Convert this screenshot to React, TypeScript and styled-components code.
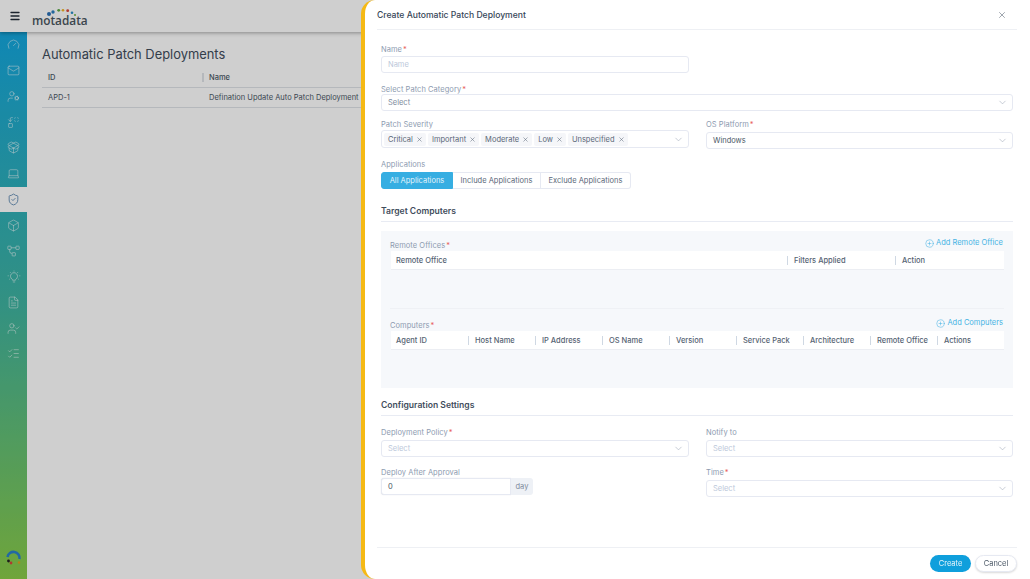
import { ReactNode } from "react"
import styled, { createGlobalStyle } from "styled-components"
import {
  Box,
  ChevronDown,
  CirclePlus,
  FileText,
  Gauge,
  Laptop,
  ListChecks,
  Mail,
  Menu,
  PackageOpen,
  Replace,
  ShieldCheck,
  UserCheck,
  UserCog,
  X,
} from "lucide-react"

const GlobalStyle = createGlobalStyle`
  html, body {
    margin: 0;
    height: 100%;
    overflow: hidden;
    background: #fff;
    font-family: Inter, "Liberation Sans", sans-serif;
    color: #364658;
  }
  #root { height: 100%; }
  * { box-sizing: border-box; }
`

const Shell = styled.div`
  position: relative;
  width: 1030px;
  height: 579px;
  overflow: hidden;
  display: flex;
  flex-direction: column;
`

const TopBar = styled.header`
  height: 32px;
  display: flex;
  align-items: center;
  padding-left: 9px;
  gap: 11px;
  box-shadow: 0 1px 4px rgba(0, 0, 0, 0.35);
  position: relative;
  z-index: 1;
  color: #222c38;
`

const Logo = styled.div`
  position: relative;
  font-family: "Open Sans", sans-serif;
  font-size: 11.8px;
  font-weight: 600;
  color: #4a5560;
  margin-top: 8px;
  line-height: 16px;
`

const LogoDots = styled.svg`
  position: absolute;
  left: 15px;
  top: -4px;
`

const Body = styled.div`
  flex: 1;
  display: flex;
  min-height: 0;
`

const Sidebar = styled.nav`
  width: 27px;
  background: linear-gradient(180deg, #14a7de 0%, #3fb3a0 50%, #8acc48 100%);
  display: flex;
  flex-direction: column;
  position: relative;
`

const NavItem = styled.div<{ $active?: boolean }>`
  height: 25.75px;
  display: flex;
  align-items: center;
  justify-content: center;
  color: ${p => (p.$active ? "#5b87b0" : "rgba(255, 255, 255, 0.55)")};
  background: ${p => (p.$active ? "#fff" : "transparent")};
`

const Spinner = styled.svg`
  position: absolute;
  left: 5px;
  bottom: 12px;
`

const Main = styled.main`
  flex: 1;
  padding: 14px 0 0 15px;
`

const PageTitle = styled.h1`
  margin: 0 0 4px;
  font-size: 12.9px;
  font-weight: 400;
  line-height: 18px;
  color: #3f4d5c;
`

const ListRow = styled.div<{ $head?: boolean }>`
  display: grid;
  grid-template-columns: 154px 1fr;
  height: 20px;
  align-items: center;
  border-bottom: 1px solid #dfe3e8;
  font-size: 7.5px;
  font-weight: ${p => (p.$head ? 500 : 400)};
  color: #4b5866;
  white-space: nowrap;
  padding-left: 6px;
`

const ListName = styled.span<{ $sep?: boolean }>`
  padding-left: 5px;
  border-left: 2px solid ${p => (p.$sep ? "#dfe3e8" : "transparent")};
`

const Overlay = styled.div`
  position: absolute;
  inset: 0;
  background: rgba(0, 0, 0, 0.19);
  backdrop-filter: blur(0.7px);
  z-index: 2;
`

const Drawer = styled.aside`
  position: absolute;
  z-index: 3;
  top: 0;
  bottom: 0;
  left: 361px;
  right: 0;
  background: #fff;
  border-left: 4px solid #f5b915;
  border-radius: 14px 0 0 14px;
  display: flex;
  flex-direction: column;
  padding: 0 13px 0 12px;
`

const DrawerHead = styled.div`
  height: 30px;
  flex: none;
  display: flex;
  align-items: center;
  justify-content: space-between;
  border-bottom: 1px solid #eef0f4;
  font-size: 8.6px;
  font-weight: 500;
  color: #364658;
  padding-right: 10px;
`

const CloseBtn = styled.span`
  display: flex;
  color: #6f7a86;
`

const Form = styled.div`
  flex: 1;
  padding: 14px 4px 0 4px;
  display: flex;
  flex-direction: column;
`

const Field = styled.div<{ $w?: string; $mb?: number; $gap: number }>`
  width: ${p => p.$w || "100%"};
  margin-bottom: ${p => p.$mb ?? 0}px;
  display: flex;
  flex-direction: column;
  gap: ${p => p.$gap}px;
`

const TwoCol = styled.div<{ $mb?: number; $mt?: number }>`
  display: grid;
  grid-template-columns: 308px 307px;
  column-gap: 17px;
  margin-top: ${p => p.$mt ?? 0}px;
  margin-bottom: ${p => p.$mb ?? 0}px;
`

const Label = styled.label`
  display: block;
  height: 10px;
  font-size: 7.5px;
  line-height: 12px;
  color: #8d9bb0;
  letter-spacing: 0.05px;
`

const Star = styled.span`
  color: #e8605c;
  margin-left: 1px;
`

const Control = styled.div<{ $h?: number; $muted?: boolean; $dark?: boolean }>`
  height: ${p => p.$h ?? 17}px;
  border: 1px solid #e6e9f2;
  border-radius: 3px;
  background: #fff;
  display: flex;
  align-items: center;
  justify-content: space-between;
  padding: 0 4px 0 6px;
  font-size: 7.5px;
  color: ${p => (p.$dark ? "#4b5866" : p.$muted ? "#bcc8da" : "#7d8a9c")};
`

const Chevron = styled(ChevronDown)`
  color: #a9b1bf;
  flex: none;
`

const TagBox = styled(Control)`
  padding: 0 4px 0 2px;
`

const Tags = styled.div`
  display: flex;
  gap: 2px;
`

const Tag = styled.span`
  height: 13px;
  padding: 0 3px 0 4px;
  display: flex;
  align-items: center;
  gap: 3px;
  background: #f5f6f9;
  border-radius: 2px;
  color: #5a6778;
  font-size: 7.5px;
`

const Segments = styled.div`
  display: flex;
  align-self: flex-start;
`

const Segment = styled.div<{ $on?: boolean; $w: number }>`
  width: ${p => p.$w}px;
  height: 17px;
  display: flex;
  align-items: center;
  justify-content: center;
  font-size: 7.5px;
  color: ${p => (p.$on ? "#e4f4fb" : "#5a6778")};
  background: ${p => (p.$on ? "#36aee2" : "#fff")};
  border: 1px solid ${p => (p.$on ? "#36aee2" : "#e6e9f2")};
  border-left-width: ${p => (p.$on ? 1 : 0)}px;
  &:first-child { border-radius: 3px 0 0 3px; }
  &:last-child { border-radius: 0 3px 3px 0; }
`

const Section = styled.h2<{ $mt?: number }>`
  margin: ${p => p.$mt ?? 0}px 0 0;
  height: 18px;
  font-size: 8.6px;
  font-weight: 600;
  line-height: 14px;
  color: #3f4d5c;
  border-bottom: 1px solid #e8ebf3;
`

const Panel = styled.div`
  margin-top: 9px;
  height: 157px;
  background: #f6f8fb;
  padding: 0 9px 0 9px;
  display: flex;
  flex-direction: column;
`

const PanelBlock = styled.div<{ $h: number; $line?: boolean }>`
  height: ${p => p.$h}px;
  flex: none;
  border-bottom: ${p => (p.$line ? "1px solid #eff1f5" : "none")};
`

const BlockHead = styled.div<{ $h: number }>`
  height: ${p => p.$h}px;
  display: flex;
  justify-content: space-between;
  align-items: flex-end;
`

const BlockLabel = styled(Label)`
  margin-bottom: 1px;
`

const AddLink = styled.a<{ $mt: number }>`
  display: flex;
  align-items: center;
  gap: 2px;
  align-self: flex-start;
  font-size: 7.5px;
  line-height: 10px;
  color: #45b3e4;
  margin-top: ${p => p.$mt}px;
  padding-right: 1px;
`

const THead = styled.div<{ $cols: string }>`
  display: grid;
  grid-template-columns: ${p => p.$cols};
  height: 19px;
  margin-left: 1px;
  background: #fff;
  border-bottom: 1px solid #eceef3;
  align-items: center;
`

const TH = styled.div<{ $sep?: boolean }>`
  font-size: 7.5px;
  font-weight: 500;
  line-height: 9px;
  color: #566373;
  padding-left: ${p => (p.$sep ? 6 : 4)}px;
  border-left: 1px solid ${p => (p.$sep ? "#cfd8e3" : "transparent")};
  white-space: nowrap;
`

const AddonRow = styled.div`
  display: flex;
`

const DayInput = styled(Control)`
  width: 130px;
  border-radius: 3px 0 0 3px;
  color: #4b5866;
  box-shadow: 0 0 1px rgba(120, 130, 150, 0.3);
`

const Addon = styled.span`
  width: 22px;
  background: #eef1f6;
  border-radius: 0 3px 3px 0;
  font-size: 7.5px;
  color: #7d8a9c;
  display: flex;
  align-items: center;
  justify-content: center;
`

const Footer = styled.div`
  height: 32px;
  flex: none;
  border-top: 1px solid #eef0f4;
  display: flex;
  justify-content: flex-end;
  gap: 4px;
  padding-top: 7px;
`

const Btn = styled.button<{ $primary?: boolean; $w: number }>`
  width: ${p => p.$w}px;
  height: 17px;
  border-radius: 9px;
  padding: 0;
  font: 7.5px Inter, sans-serif;
  color: ${p => (p.$primary ? "#e6f4fb" : "#4b5866")};
  background: ${p => (p.$primary ? "#0f9fdc" : "#fff")};
  border: ${p => (p.$primary ? "none" : "1px solid #e6e9f2")};
  box-shadow: ${p => (p.$primary ? "none" : "0 1px 2px rgba(0, 0, 0, 0.15)")};
`

const NodesIcon = () => (
  <svg width="13" height="13" viewBox="0 0 24 24" fill="none" stroke="currentColor" strokeWidth="1.7">
    <rect x="1.5" y="4" width="6" height="6" rx="1" />
    <rect x="16.5" y="4" width="6" height="6" rx="1" />
    <rect x="9.5" y="16" width="6" height="6" rx="1" />
    <path d="M7.5 7h9M5 10v4a3 3 0 0 0 3 3h1.5" />
  </svg>
)

const BulbIcon = () => (
  <svg width="14" height="14" viewBox="0 0 24 24" fill="none" stroke="currentColor" strokeWidth="1.6">
    <path d="M8.5 15.5a6 6 0 1 1 7 0c-.6.5-1 1.2-1 2h-5c0-.8-.4-1.5-1-2Z" />
    <path d="M10 20.5h4M12 1v1.5M3 10H1.2M22.8 10H21M5 3.5l1.3 1.3M19 3.5l-1.3 1.3M4 16l1.4-1M20 16l-1.4-1" />
  </svg>
)

const lucideNav = [Gauge, Mail, UserCog, Replace, PackageOpen, Laptop, ShieldCheck, Box]
const lucideNavEnd = [FileText, UserCheck, ListChecks]

const tags = ["Critical", "Important", "Moderate", "Low", "Unspecified"]

const remoteCols = "396px 108px 109px"
const computerCols = "77px repeat(8, 67px)"
const computerHeads = ["Agent ID", "Host Name", "IP Address", "OS Name", "Version", "Service Pack", "Architecture", "Remote Office", "Actions"]

const Req = ({ children }: { children: ReactNode }) => (
  <Label>{children}<Star>*</Star></Label>
)

const SelectBox = ({ text, muted, dark }: { text: string; muted?: boolean; dark?: boolean }) => (
  <Control $muted={muted} $dark={dark}>
    {text}
    <Chevron size={11} strokeWidth={1.4} />
  </Control>
)

const App = () => {
  return (
    <Shell>
      <GlobalStyle />
      <TopBar>
        <Menu size={12} strokeWidth={2.6} />
        <Logo>
          <LogoDots width="32" height="12" viewBox="0 0 32 12">
            <circle cx="2" cy="6" r="2" fill="#2a6fb5" />
            <circle cx="6" cy="4" r="1.7" fill="#2a7fc0" />
            <circle cx="11.7" cy="2.3" r="1.4" fill="#5aa845" />
            <circle cx="16" cy="2.3" r="1.3" fill="#f0b429" />
            <circle cx="20.7" cy="2.7" r="1.4" fill="#d9483b" />
            <circle cx="25" cy="4.7" r="1.3" fill="#2a8fc8" />
            <circle cx="28" cy="7" r="1" fill="#6cb33f" />
          </LogoDots>
          motadata
        </Logo>
      </TopBar>
      <Body>
        <Sidebar>
          {lucideNav.map((Icon, i) => (
            <NavItem key={i} $active={i === 6}>
              <Icon size={13} strokeWidth={1.6} />
            </NavItem>
          ))}
          <NavItem><NodesIcon /></NavItem>
          <NavItem><BulbIcon /></NavItem>
          {lucideNavEnd.map((Icon, i) => (
            <NavItem key={i}>
              <Icon size={13} strokeWidth={1.6} />
            </NavItem>
          ))}
          <Spinner width="18" height="18" viewBox="0 0 18 18">
            <path d="M2.5 8 A6 6 0 0 1 14.5 10" fill="none" stroke="#2a82c9" strokeWidth="2.6" />
            <circle cx="3.5" cy="12" r="1.4" fill="#222" />
            <circle cx="6" cy="14" r="1.4" fill="#d9483b" />
            <circle cx="14" cy="13.5" r="1.2" fill="#e0a020" />
          </Spinner>
        </Sidebar>
        <Main>
          <PageTitle>Automatic Patch Deployments</PageTitle>
          <ListRow $head>
            <span>ID</span>
            <ListName $sep>Name</ListName>
          </ListRow>
          <ListRow>
            <span>APD-1</span>
            <ListName>Defination Update Auto Patch Deployment</ListName>
          </ListRow>
        </Main>
      </Body>
      <Overlay />
      <Drawer>
        <DrawerHead>
          Create Automatic Patch Deployment
          <CloseBtn><X size={10} strokeWidth={1.6} /></CloseBtn>
        </DrawerHead>
        <Form>
          <Field $w="308px" $mb={11} $gap={2}>
            <Req>Name</Req>
            <Control $muted>Name</Control>
          </Field>
          <Field $mb={8} $gap={0}>
            <Req>Select Patch Category</Req>
            <SelectBox text="Select" />
          </Field>
          <TwoCol $mb={10}>
            <Field $gap={1}>
              <Label>Patch Severity</Label>
              <TagBox $h={18}>
                <Tags>
                  {tags.map(t => (
                    <Tag key={t}>{t}<X size={7} strokeWidth={1.8} /></Tag>
                  ))}
                </Tags>
                <Chevron size={11} strokeWidth={1.4} />
              </TagBox>
            </Field>
            <Field $gap={3}>
              <Req>OS Platform</Req>
              <SelectBox text="Windows" dark />
            </Field>
          </TwoCol>
          <Field $gap={3}>
            <Label>Applications</Label>
            <Segments>
              <Segment $on $w={72}>All Applications</Segment>
              <Segment $w={88}>Include Applications</Segment>
              <Segment $w={90}>Exclude Applications</Segment>
            </Segments>
          </Field>
          <Section $mt={15}>Target Computers</Section>
          <Panel>
            <PanelBlock $h={78} $line>
              <BlockHead $h={20}>
                <BlockLabel>Remote Offices<Star>*</Star></BlockLabel>
                <AddLink $mt={7}><CirclePlus size={9} strokeWidth={1.4} />Add Remote Office</AddLink>
              </BlockHead>
              <THead $cols={remoteCols}>
                <TH>Remote Office</TH>
                <TH $sep>Filters Applied</TH>
                <TH $sep>Action</TH>
              </THead>
            </PanelBlock>
            <PanelBlock $h={79}>
              <BlockHead $h={22}>
                <BlockLabel>Computers<Star>*</Star></BlockLabel>
                <AddLink $mt={9}><CirclePlus size={9} strokeWidth={1.4} />Add Computers</AddLink>
              </BlockHead>
              <THead $cols={computerCols}>
                {computerHeads.map((h, i) => (
                  <TH key={h} $sep={i > 0}>{h}</TH>
                ))}
              </THead>
            </PanelBlock>
          </Panel>
          <Section $mt={10}>Configuration Settings</Section>
          <TwoCol $mt={11} $mb={10}>
            <Field $gap={3}>
              <Req>Deployment Policy</Req>
              <SelectBox text="Select" muted />
            </Field>
            <Field $gap={3}>
              <Label>Notify to</Label>
              <SelectBox text="Select" muted />
            </Field>
          </TwoCol>
          <TwoCol>
            <Field $gap={1}>
              <Label>Deploy After Approval</Label>
              <AddonRow>
                <DayInput>0</DayInput>
                <Addon>day</Addon>
              </AddonRow>
            </Field>
            <Field $gap={3}>
              <Req>Time</Req>
              <SelectBox text="Select" muted />
            </Field>
          </TwoCol>
        </Form>
        <Footer>
          <Btn $primary $w={41}>Create</Btn>
          <Btn $w={42}>Cancel</Btn>
        </Footer>
      </Drawer>
    </Shell>
  )
}

export default App
